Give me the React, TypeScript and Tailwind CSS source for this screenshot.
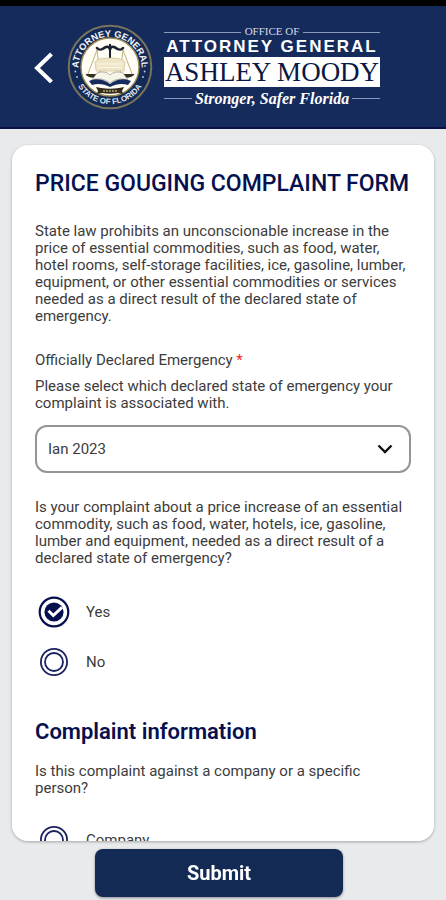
import React, { useState } from 'react';

interface RadioOptionProps {
  name: string;
  label: string;
  checked: boolean;
  onChange: () => void;
}

const RadioOption: React.FC<RadioOptionProps> = ({ name, label, checked, onChange }) => (
  <label className="flex h-[50px] items-center gap-4 cursor-pointer">
    <span className="ml-[3px] grid size-8 place-items-center">
      <input
        type="radio"
        name={name}
        checked={checked}
        onChange={onChange}
        className="col-start-1 row-start-1 size-8 appearance-none rounded-full"
      />
      <svg viewBox="0 0 32 32" className="pointer-events-none col-start-1 row-start-1 size-8" aria-hidden="true">
        {checked ? (
          <>
            <circle cx="16" cy="16" r="14.3" fill="#fff" stroke="#06104f" strokeWidth="2.2" />
            <circle cx="16" cy="16" r="9.6" fill="#06104f" />
            <path d="M10.500 14.800l4.800 4.700 8.700-8.200" fill="none" stroke="#fff" strokeWidth="3" />
          </>
        ) : (
          <>
            <circle cx="16" cy="16" r="13.1" fill="#fff" stroke="#1a2260" strokeWidth="1.8" />
            <circle cx="16" cy="16" r="9" fill="none" stroke="#1a2260" strokeWidth="1.8" />
          </>
        )}
      </svg>
    </span>
    <span>{label}</span>
  </label>
);

const Seal: React.FC = () => (
  <svg viewBox="0 0 86 86" className="size-[86px] shrink-0" role="img" aria-label="Seal of the Attorney General">
    <defs>
      <path id="seal-top" d="M11.300 44.500a31.700 31.700 0 0 1 63.400 0" />
      <path id="seal-bottom" d="M5.800 43a37.200 37.200 0 0 0 74.400 0" />
    </defs>
    <circle cx="43" cy="43" r="41.3" fill="#132a57" stroke="#77735c" strokeWidth="2" />
    <circle cx="43" cy="43" r="29" fill="#fffdf5" stroke="#9c8c55" strokeWidth="1.4" />
    <text fill="#f3f5fa" fontSize="9.3" fontWeight="700" fontFamily="Liberation Sans, sans-serif" textAnchor="middle">
      <textPath href="#seal-top" startOffset="50%">ATTORNEY GENERAL</textPath>
    </text>
    <text fill="#dfe4ef" fontSize="8" fontWeight="700" fontFamily="Liberation Sans, sans-serif" textAnchor="middle">
      <textPath href="#seal-bottom" startOffset="50%">STATE OF FLORIDA</textPath>
    </text>
    <g fill="#c5cde0">
      <circle cx="8" cy="42" r="0.9" />
      <circle cx="8.400" cy="47.500" r="0.9" />
      <circle cx="10" cy="53" r="0.9" />
      <circle cx="78" cy="42" r="0.9" />
      <circle cx="77.600" cy="47.500" r="0.9" />
      <circle cx="76" cy="53" r="0.9" />
    </g>
    {/* scales */}
    <path d="M30 24c3 4 6 0 9-1s4 2 4 3c0-1 1-4 4-3s6 5 9 1" fill="none" stroke="#1c2230" strokeWidth="2.6" strokeLinecap="round" />
    <path d="M43 20v14" stroke="#1c2230" strokeWidth="2" />
    <path d="M30 26l-9.500 25M30 26l3 25M56 26l-3 25M56 26l9.500 25" fill="none" stroke="#b5a873" strokeWidth="0.9" />
    <path d="M18.500 50h15.500c-2 5-13 5-15.500 0zM52 50h15.500c-2.500 5-13.500 5-15.500 0z" fill="#33301f" />
    {/* scroll */}
    <path d="M28 38c2-3 6-4 15-4s13 1 15 4l-1 9H29z" fill="#efe6c8" stroke="#c9bb88" strokeWidth="0.6" />
    <path d="M31 40h24M31 43.500h24" stroke="#fbf7e8" strokeWidth="1.200" />
    {/* open book */}
    <path d="M30 49c5-2 10-1 13 2 3-3 8-4 13-2l5 7c-7-2-13-1-18 3-5-4-11-5-18-3z" fill="#f7f4e8" stroke="#8b866f" strokeWidth="0.6" />
    <path d="M22 57c7-3 15-2 21 3 6-5 14-6 21-3l-3 4c-6-2-12-1-18 2-6-3-12-4-18-2z" fill="#162c5e" />
    <path d="M29 63l5 1c6 1 12 1 18 0l5-1-2 4 1 3-5-1c-5 1-11 1-16 0l-5 1 1-3z" fill="#352d1c" />
    <path d="M36 67h14" stroke="#b4a877" strokeWidth="1.600" strokeDasharray="2 1" />
  </svg>
);

const Wordmark: React.FC = () => (
  <div className="flex w-[216px] flex-col text-white">
    <div className="flex h-3 items-center gap-1 font-['Liberation_Serif',serif] text-[11px] leading-3 text-[#d5dbea]">
      <span className="mt-1 h-px flex-1 bg-[#8b9abb]" />
      OFFICE OF
      <span className="mt-1 h-px flex-1 bg-[#8b9abb]" />
    </div>
    <div className="flex h-5 items-center justify-center whitespace-nowrap font-['Liberation_Sans',sans-serif] text-[17px] leading-5 font-bold tracking-[2px]">
      ATTORNEY GENERAL
    </div>
    <div className="flex h-[30px] items-center justify-center whitespace-nowrap bg-white font-['Liberation_Serif',serif] text-[27px] leading-[30px] text-[#0b1744]">
      ASHLEY MOODY
    </div>
    <div className="flex h-6 items-center gap-[3px] whitespace-nowrap font-['Liberation_Serif',serif] text-base leading-6 font-bold italic">
      <span className="h-px flex-1 bg-[#8b9abb]" />
      Stronger, Safer Florida
      <span className="h-px flex-1 bg-[#8b9abb]" />
    </div>
  </div>
);

const App: React.FC = () => {
  const [priceIncrease, setPriceIncrease] = useState('yes');
  const [against, setAgainst] = useState('');

  return (
    <div className="flex h-screen flex-col bg-[#e9eaec] font-['Roboto',sans-serif] text-[15px] leading-[17px] text-[#3c3c3c]">
      <div className="h-[6px] shrink-0 bg-black" />
      <header className="flex h-[123px] shrink-0 items-center border-b-2 border-[#0a0f4a] bg-[#142b5c] pl-[33px]">
        <button type="button" aria-label="Back" className="mr-3 w-[22px]">
          <svg viewBox="0 0 22 32" className="h-8 w-[22px]" aria-hidden="true">
            <path d="M18.500 3L4 17l14.500 14" fill="none" stroke="#fff" strokeWidth="4" />
          </svg>
        </button>
        <Seal />
        <div className="ml-[11px] pt-[2px]">
          <Wordmark />
        </div>
      </header>

      <main className="mx-3 mt-4 min-h-0 flex-1 overflow-y-auto rounded-2xl bg-white px-[23px] shadow-[0_1px_3px_rgba(0,0,0,0.3)] [scrollbar-width:none]">
        <h1 className="mt-6 whitespace-nowrap text-[23px] leading-[30px] font-medium text-[#06104f]">
          PRICE GOUGING COMPLAINT FORM
        </h1>
        <p className="mt-6">
          State law prohibits an unconscionable increase in the price of essential commodities, such as food, water,
          hotel rooms, self-storage facilities, ice, gasoline, lumber, equipment, or other essential commodities or
          services needed as a direct result of the declared state of emergency.
        </p>

        <label htmlFor="emergency" className="mt-[27px] block">
          Officially Declared Emergency <span className="text-[#ff2020]">*</span>
        </label>
        <p className="mt-[9px]">Please select which declared state of emergency your complaint is associated with.</p>
        <div className="relative mt-[13px]">
          <select
            id="emergency"
            defaultValue="ian"
            className="h-12 w-full appearance-none rounded-xl border-2 border-[#959595] bg-white px-[11px]"
          >
            <option value="ian">Ian 2023</option>
          </select>
          <svg viewBox="0 0 16 16" className="pointer-events-none absolute top-4 right-[18px] size-4" aria-hidden="true">
            <path d="M1.500 4.500L8 11l6.500-6.500" fill="none" stroke="#111" strokeWidth="2.400" />
          </svg>
        </div>

        <fieldset className="mt-[26px]">
          <legend>
            Is your complaint about a price increase of an essential commodity, such as food, water, hotels, ice,
            gasoline, lumber and equipment, needed as a direct result of a declared state of emergency?
          </legend>
          <div className="mt-5">
            <RadioOption name="increase" label="Yes" checked={priceIncrease === 'yes'} onChange={() => setPriceIncrease('yes')} />
            <RadioOption name="increase" label="No" checked={priceIncrease === 'no'} onChange={() => setPriceIncrease('no')} />
          </div>
        </fieldset>

        <h2 className="mt-[30px] text-[22px] leading-[30px] font-semibold text-[#06104f]">Complaint information</h2>
        <fieldset className="mt-4">
          <legend>Is this complaint against a company or a specific person?</legend>
          <div className="mt-[18px]">
            <RadioOption name="against" label="Company" checked={against === 'company'} onChange={() => setAgainst('company')} />
          </div>
        </fieldset>
      </main>

      <footer className="flex shrink-0 justify-center pt-2 pr-2 pb-[3px]">
        <button
          type="button"
          className="h-12 w-[248px] rounded-lg bg-[#132a55] text-xl font-bold text-white shadow-[0_1px_3px_rgba(0,0,0,0.4)]"
        >
          Submit
        </button>
      </footer>
    </div>
  );
};

export default App;
